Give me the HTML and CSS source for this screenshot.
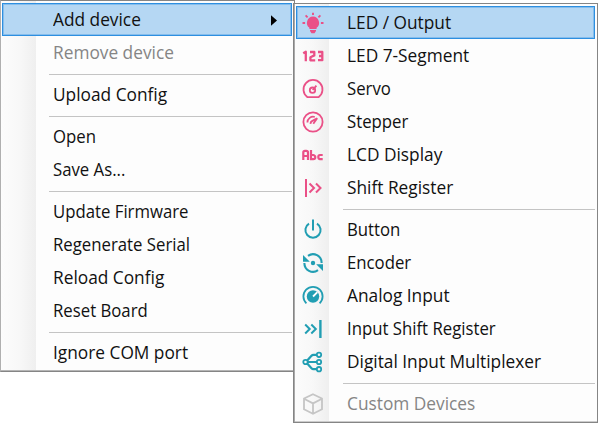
FILE: index.html
```
<!DOCTYPE html>
<html lang="en">
<head>
<meta charset="utf-8">
<title>Device menu</title>
<link rel="stylesheet" href="styles.css">
</head>
<body>
<nav class="menu main">
  <div class="item active"><span class="label wide">Add device</span><svg class="arrow" viewBox="0 0 7 12"><path d="M0 0L7 6L0 12Z"/></svg></div>
  <div class="item disabled"><span class="label wide">Remove device</span></div>
  <hr>
  <div class="item"><span class="label wide">Upload Config</span></div>
  <hr>
  <div class="item"><span class="label">Open</span></div>
  <div class="item"><span class="label">Save As...</span></div>
  <hr>
  <div class="item"><span class="label">Update Firmware</span></div>
  <div class="item"><span class="label">Regenerate Serial</span></div>
  <div class="item"><span class="label wide">Reload Config</span></div>
  <div class="item"><span class="label">Reset Board</span></div>
  <hr>
  <div class="item"><span class="label wide">Ignore COM port</span></div>
</nav>
<nav class="menu sub">
  <div class="item active"><svg class="icon pink" viewBox="0 0 22 22"><path class="fill" d="M11 4.5a6.3 6.3 0 0 1 3.6 11.3V17H7.4v-1.2A6.3 6.3 0 0 1 11 4.5ZM8 18h6v1l-1.5 2.3h-3L8 19Z"/><path d="M11 .8v2.2M3.6 3.4l2 2M18.4 3.4l-2 2M.5 11h2.6M18.9 11h2.6" stroke-width="1.9"/></svg><span class="label wide">LED / Output</span></div>
  <div class="item"><svg class="icon pink" viewBox="0 0 22 22"><path d="M1.2 8.2L3.8 6.8V16.3M8 7h4.3v3.4L8.4 12.2v3.1h4.8M16 7h4.3v8.2H16M17 11h3.3" stroke-width="2.3" stroke-linejoin="round"/></svg><span class="label wide">LED 7-Segment</span></div>
  <div class="item"><svg class="icon pink" viewBox="0 0 22 22"><path d="M5.5 19.2A9.5 9.5 0 1 1 16.5 19.2Z"/><circle cx="10.5" cy="12.2" r="2.7"/><path d="M10.7 12L14.4 7.6"/></svg><span class="label">Servo</span></div>
  <div class="item"><svg class="icon pink" viewBox="0 0 22 22"><circle cx="11" cy="11" r="9.6"/><path d="M5.4 11.5A5.7 5.7 0 0 1 12.8 6M8.6 12.9A3.3 3.3 0 0 1 10.8 9.6L15.2 7.2L11.3 12.8"/></svg><span class="label">Stepper</span></div>
  <div class="item"><svg class="icon pink" viewBox="0 0 22 22"><path d="M1.3 16V8.5Q1.3 6.8 3 6.8H4.2Q6 6.8 6 8.5V16M1.3 12H6M9 6V15.2H11.3Q13.3 15.2 13.3 13.3T11.3 11H9M20.7 11H18Q16.3 11 16.3 13.1T18 15.2H20.7" stroke-width="2.2"/></svg><span class="label wide">LCD Display</span></div>
  <div class="item"><svg class="icon pink" viewBox="0 0 22 22"><path d="M4 2v18M7.5 6.5L12 11L7.5 15.5M14 6.5L18.5 11L14 15.5" stroke-width="2"/></svg><span class="label wide">Shift Register</span></div>
  <hr>
  <div class="item"><svg class="icon teal" viewBox="0 0 22 22"><path d="M11 .5V11.5M7 4.6A7.6 7.6 0 1 0 15 4.6" stroke-width="2"/></svg><span class="label">Button</span></div>
  <div class="item"><svg class="icon teal" viewBox="0 0 22 22"><path d="M6 3.8A8.6 8.6 0 0 1 19.6 11M16 18.2A8.6 8.6 0 0 1 2.4 11" stroke-width="2.1"/><path class="fill" d="M1 3V9.7H7.8ZM21 19V12.3H14.2Z"/><circle class="fill" cx="11" cy="11" r="2.2"/></svg><span class="label">Encoder</span></div>
  <div class="item"><svg class="icon teal" viewBox="0 0 22 22"><path d="M4.4 18.4A9.6 9.6 0 1 1 17.6 18.4"/><circle class="fill" cx="11" cy="11.5" r="6.2"/><path class="needle" d="M11 11.5L15.4 7.1"/></svg><span class="label wide">Analog Input</span></div>
  <div class="item"><svg class="icon teal" viewBox="0 0 22 22"><path d="M3.2 6.5L7.7 11L3.2 15.5M9.3 6.5L13.8 11L9.3 15.5" stroke-width="2"/><path d="M18.4 2v18" stroke-width="2.4"/></svg><span class="label">Input Shift Register</span></div>
  <div class="item"><svg class="icon teal" viewBox="0 0 22 22"><path d="M5.5 11H15M5 9.8L9.5 4.7Q10.3 3.8 11.5 3.8H15M5 12.2L9.5 17.3Q10.3 18.2 11.5 18.2H15" stroke-width="2.2"/><circle cx="3.5" cy="11" r="2.2"/><circle cx="17" cy="3.8" r="2.2"/><circle cx="17" cy="11" r="2.2"/><circle cx="17" cy="18.2" r="2.2"/></svg><span class="label wide">Digital Input Multiplexer</span></div>
  <hr>
  <div class="item disabled"><svg class="icon gray" viewBox="0 0 22 22"><path d="M11 1.2L20 5.5V16.2L11 20.8L2 16.2V5.5ZM2 5.8L11 10.4L20 5.8M11 10.4V20.8"/></svg><span class="label wide">Custom Devices</span></div>
</nav>
</body>
</html>
```
FILE: styles.css
```
* { box-sizing: border-box; }
body {
  margin: 0;
  display: flex;
  align-items: flex-start;
  width: 598px;
  height: 423px;
  overflow: hidden;
  background: #fff;
  font: 17.5px/33px "Open Sans", "Noto Sans", sans-serif;
  color: #111;
}
.menu {
  flex: none;
  border: 1px solid #858585;
  background: linear-gradient(90deg, #fcfcfc, #f8f8f8 50%, #efefef) 1px 0 / 34px 100% no-repeat, #fdfdfd;
}
.main {
  width: 295px;
  height: 372px;
  padding: 2px 2px 1px 1px;
  border-left-color: #b0b0b0;
  box-shadow: inset 0 -1px #b5b5b5;
}
.sub {
  position: relative;
  width: 305px;
  height: 420px;
  margin: 3px 0 0 -2px;
  padding: 2px;
  box-shadow: inset 1px 0 #aaa, inset 0 -1px #ccc;
}
.item {
  display: flex;
  align-items: center;
  height: 33px;
  padding-left: 51px;
  white-space: nowrap;
}
.sub .item { padding-left: 6px; }
.active {
  background: #b5d7f3;
  border: 1px solid #2d8fe0;
  box-shadow: inset 0 0 0 1px #86bdec;
}
.main .active { padding-left: 50px; }
.sub .active { padding-left: 5px; }
.disabled { color: #858585; }
.label {
  transform: scaleX(.957);
  transform-origin: left center;
}
.wide { transform: scaleX(.988); }
hr {
  height: 1px;
  margin: 5px 0 3px 47px;
  border: 0;
  background: #c4c4c4;
}
.arrow {
  width: 6px;
  height: 11px;
  margin: 1px 14px 0 auto;
  fill: #000;
}
.icon {
  width: 22px;
  height: 22px;
  margin-right: 23px;
  fill: none;
  stroke: currentColor;
  stroke-width: 1.8;
}
.fill { fill: currentColor; stroke: none; }
.needle { stroke: #fff; stroke-width: 1.8; }
.pink { color: #ea5087; }
.teal { color: #219eb3; }
.gray { color: #c5c5c5; }
```
